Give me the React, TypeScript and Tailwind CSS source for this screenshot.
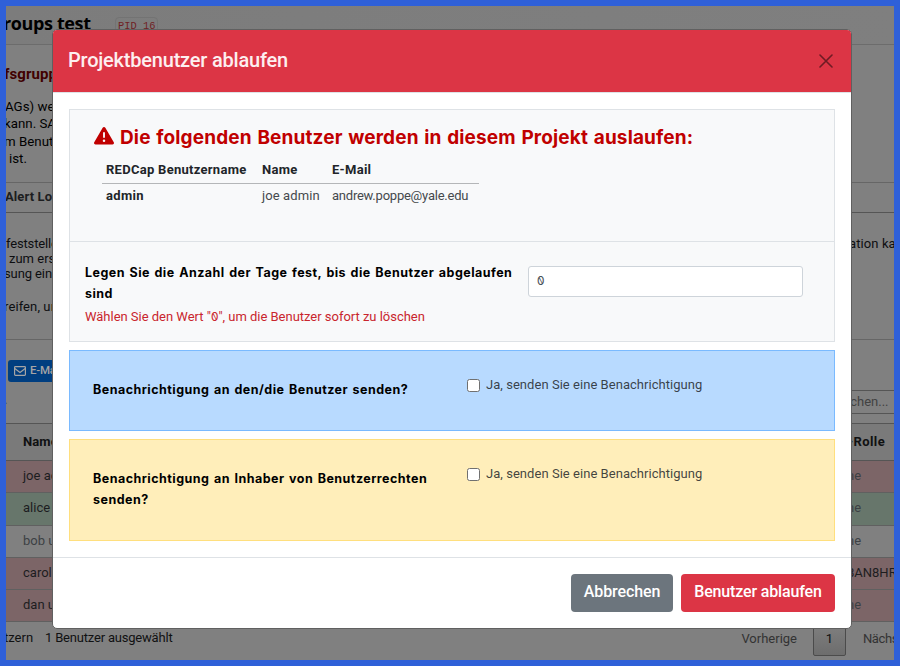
import React from "react";

const rows = [
  { name: "joe admin", role: "ne", tone: "bg-[#7c6567] h-[32px] text-[#1c1d1f]", roleTone: "text-[#3c4044]" },
  { name: "alice manager", role: "ne", tone: "bg-[#67766b] h-[33px] text-[#1c1d1f]", roleTone: "text-[#3c4044]" },
  { name: "bob user", role: "ne", tone: "bg-[#808080] h-[32px] text-[#3c4044]", roleTone: "text-[#3c4044]" },
  { name: "carol user", role: "8AN8HR", tone: "bg-[#7c6567] h-[32px] text-[#1c1d1f]", roleTone: "text-[#1c1d1f]" },
  { name: "dan user", role: "ne", tone: "bg-[#7c6567] h-[32px] text-[#1c1d1f]", roleTone: "text-[#3c4044]" },
];

function Page() {
  return (
    <div className="flex h-full flex-col whitespace-nowrap text-[13px] text-[#0d0e10]">
      <div className="flex h-[39px] shrink-0 items-start border-b border-[#6c6c6c] bg-linear-to-r from-[#7c7c7c] to-[#7f7f7f]">
        <span className="-ml-[3px] mt-[4px] w-[112px] font-['Open_Sans',sans-serif] text-[18px] leading-[27px] font-bold tracking-[-0.38px] text-black">
          roups test
        </span>
        <span className="mt-[11px] rounded border border-[#737373] px-[2px] font-['Liberation_Mono',monospace] text-[10.4px] leading-[17px] text-[#702024]">
          PID 16
        </span>
      </div>
      <div className="h-[138px] shrink-0 border-b border-[#666]">
        <div className="-ml-[2px] mt-[18px] h-[22px] text-[15px] leading-[22px] font-bold tracking-[0.1px] text-[#400000]">fsgruppen</div>
        <div className="-ml-[1px] mt-[13px] text-[13.3px] leading-[17.3px] text-black">
          <p>AGs) werden</p>
          <p className="-ml-[1px]">kann. SAGs</p>
          <p className="-ml-[1px]">m Benutzer</p>
          <p className="ml-[4px]">ist.</p>
        </div>
      </div>
      <div className="flex h-[30px] shrink-0 items-center border-b border-[#555] pb-[1px] font-bold text-[#1c1d1f]">
        <span className="-ml-[1px] tracking-[0.1px]">Alert Log</span>
      </div>
      <div className="h-[127px] shrink-0 border-b border-[#666] pt-[23px] leading-[15px]">
        <div className="flex justify-between">
          <span className="tracking-[-0.15px]">feststellen</span>
          <span className="w-[45px] tracking-[0.1px]">ation ka</span>
        </div>
        <p className="ml-[3px]">zum ersten</p>
        <p className="-ml-[2px] tracking-[-0.1px]">sung eines</p>
        <p className="mt-[18px] -ml-[2px] tracking-[0.1px]">reifen, um</p>
      </div>
      <div className="h-[84px] shrink-0 border-b border-[#555] pt-[20px]">
        <div className="ml-[2px] flex h-[22px] w-[120px] items-center gap-[4px] rounded-[3px] bg-[#003e80] pb-[1px] pl-[6px] text-[11.5px] font-medium tracking-[-0.2px] text-[#a5a5a5]">
          <svg width="12" height="10" viewBox="0 0 12 10" className="shrink-0" fill="none" stroke="#a5a5a5" strokeWidth="1.2">
            <rect x=".6" y=".6" width="10.8" height="8.8" rx=".8" />
            <path d="M.8 2.6 6 6.4l5.2-3.8" />
          </svg>
          E-Mail senden
        </div>
        <div className="mt-[8px] flex h-[24px] justify-between">
          <span className="-ml-[2px] text-[#33363a]">.</span>
          <span className="flex h-[24px] w-[60px] items-center border-y border-[#555] pl-[9px] text-[#424242]">uchen...</span>
        </div>
      </div>
      <div className="flex h-[37px] shrink-0 items-center justify-between border-b border-[#555] bg-[#7a7a7a] pl-[17px] font-bold text-[#101112]">
        <span className="tracking-[0.1px]">Name</span>
        <span className="w-[46px] tracking-[0.4px]">-Rolle</span>
      </div>
      {rows.map((r) => (
        <div key={r.name} className={"flex shrink-0 items-center justify-between border-b border-[#606060] pb-[2px] pl-[17px] " + r.tone}>
          <span>{r.name}</span>
          <span className={"w-[47px] " + r.roleTone}>{r.role}</span>
        </div>
      ))}
      <div className="flex min-h-0 flex-1 items-start text-[#101112]">
        <span className="mt-[6px] -ml-[2px] leading-[20px]">tzern</span>
        <span className="mt-[6px] ml-[12px] leading-[20px] tracking-[-0.2px]">1 Benutzer ausgewählt</span>
        <span className="mt-[7px] ml-auto leading-[20px] text-[#333]">Vorherige</span>
        <span className="ml-[16px] flex h-[34px] w-[33px] items-center justify-center rounded-[2px] border border-[#4b4b4b] bg-linear-to-b from-[#808080] to-[#6d6d6d]">
          1
        </span>
        <span className="mt-[7px] ml-[17px] w-[31px] leading-[20px] tracking-[-0.4px] text-[#333]">Nächs</span>
      </div>
    </div>
  );
}

function Choice() {
  return (
    <label className="-mt-[1px] flex h-[14px] items-center">
      <span className="mr-[6px] h-[13px] w-[13px] rounded-[2.5px] border border-[#707070] bg-white" />
      <span className="text-[13px] tracking-[0.04px] text-[#212529]/85">Ja, senden Sie eine Benachrichtigung</span>
    </label>
  );
}

function Zero() {
  return <span className="inline-block -scale-x-100 font-['Inter'] text-[12px] [font-feature-settings:'zero']">0</span>;
}

const label = "font-['Inter'] text-[12.5px] leading-[21px] font-bold tracking-[0.47px] [word-spacing:1.1px] text-black";

function Modal() {
  return (
    <div className="absolute top-[29px] left-[52px] flex h-[600px] w-[800px] flex-col overflow-hidden rounded-[5px] border border-[#606060] bg-white whitespace-nowrap">
      <div className="flex h-[63px] shrink-0 items-center justify-between border-b border-[#dee2e6] bg-[#dc3545] pr-[18px] pl-[15px]">
        <h5 className="-mt-[3px] text-[20px] font-medium tracking-[-0.21px] text-[#fdeff0]">Projektbenutzer ablaufen</h5>
        <svg width="14" height="14" viewBox="0 0 14 14" fill="none" stroke="#6e1b24" strokeWidth="1.6" strokeLinecap="round">
          <path d="m1 1 12 12M13 1 1 13" />
        </svg>
      </div>
      <div className="flex h-[465px] shrink-0 flex-col gap-[8px] border-b border-[#dee2e6] px-[16px] pt-[16px]">
        <div className="h-[233px] border border-[#dee2e6] bg-[#f8f9fa]">
          <div className="h-[132px] border-b border-[#dee2e6] pt-[14px] pl-[24px]">
            <div className="flex h-[27px] items-center gap-[6px] text-[#c00000]">
              <svg width="20" height="18" viewBox="0 0 512 460" className="-mt-[3px] shrink-0">
                <path
                  fill="currentColor"
                  d="M256 0c14 0 27 8 34 20l216 368c7 12 7 27 0 39s-20 20-34 20H40c-14 0-27-7-34-20s-7-27 0-39L222 20c7-12 20-20 34-20z"
                />
                <path fill="none" stroke="#f8f9fa" strokeWidth="48" strokeLinecap="round" d="M256 152v104" />
                <circle cx="256" cy="352" r="32" fill="#f8f9fa" />
              </svg>
              <span className="mt-[1px] font-['Inter'] text-[19px] font-bold tracking-[0.14px] [word-spacing:1px]">
                Die folgenden Benutzer werden in diesem Projekt auslaufen:
              </span>
            </div>
            <div className="ml-[8px] w-[377px] text-[13px] text-[#212529]">
              <div className="grid h-[33px] grid-cols-[156px_70px_1fr] items-center border-b border-[#b4b6b8] pt-[6px] pl-[4px] font-bold tracking-[0.28px]">
                <span>REDCap Benutzername</span>
                <span>Name</span>
                <span>E-Mail</span>
              </div>
              <div className="grid h-[24px] grid-cols-[156px_70px_1fr] items-center pl-[4px]">
                <span className="font-bold tracking-[0.3px]">admin</span>
                <span className="tracking-[0.1px] text-[#45494d]">joe admin</span>
                <span className="tracking-[-0.23px] text-[#45494d]">andrew.poppe@yale.edu</span>
              </div>
            </div>
          </div>
          <div className="flex pt-[20px] pl-[15px]">
            <div className="w-[443px]">
              <div className={label}>
                Legen Sie die Anzahl der Tage fest, bis die Benutzer abgelaufen
                <br />
                sind
              </div>
              <div className="mt-[3px] text-[13px] leading-[20px] tracking-[-0.02px] text-[#c9252d]">
                Wählen Sie den Wert "<Zero />", um die Benutzer sofort zu löschen
              </div>
            </div>
            <div className="mt-[4px] flex h-[31px] w-[275px] items-center rounded-[3px] border border-[#ced4da] bg-white pb-[2px] pl-[8px] text-[#495057]">
              <Zero />
            </div>
          </div>
        </div>
        <div className="flex h-[81px] border border-[#7abaff] bg-[#b8daff] pt-[28px] pl-[23px]">
          <div className="w-[374px]">
            <div className={label}>Benachrichtigung an den/die Benutzer senden?</div>
          </div>
          <Choice />
        </div>
        <div className="flex h-[102px] border border-[#ffdf7e] bg-[#ffeeba] pt-[28px] pl-[23px]">
          <div className="w-[374px]">
            <div className={label}>
              Benachrichtigung an Inhaber von Benutzerrechten
              <br />
              senden?
            </div>
          </div>
          <Choice />
        </div>
      </div>
      <div className="flex flex-1 items-start justify-end gap-[8px] pt-[16px] pr-[16px] text-[16px] font-medium text-white">
        <button className="h-[38px] w-[102px] rounded-[4px] bg-[#6c757d] pb-[2px] tracking-[-0.1px]">Abbrechen</button>
        <button className="h-[38px] w-[154px] rounded-[4px] bg-[#dc3545] pb-[2px] tracking-[-0.15px]">Benutzer ablaufen</button>
      </div>
    </div>
  );
}

export default function App() {
  return (
    <div className="relative h-[666px] w-[900px] overflow-hidden border-[6px] border-[#2f60d8] bg-[#808080] font-['Roboto','Liberation_Sans',sans-serif]">
      <Page />
      <div className="absolute -top-[6px] -left-[6px] h-0 w-0">
        <Modal />
      </div>
    </div>
  );
}
